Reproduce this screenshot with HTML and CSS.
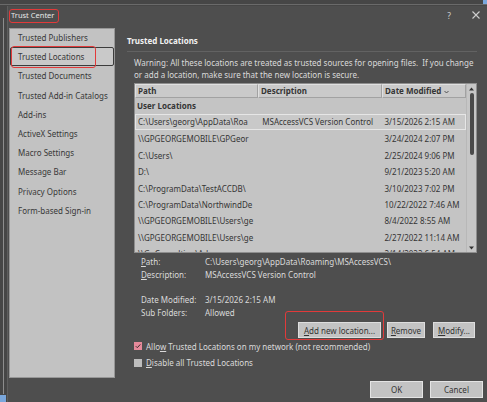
FILE: index.html
```html
<!DOCTYPE html>
<html>
<head>
<meta charset="utf-8">
<title>Trust Center</title>
<link rel="stylesheet" href="styles.css">
</head>
<body>
<div class="desk">
  <span class="corner corner-tr"></span>
  <span class="corner corner-bl"></span>
  <div class="dialog">
    <div class="titlebar">
      <span class="title">Trust Center</span>
      <span class="tb-help">?</span>
      <span class="tb-close"><svg width="8" height="8" viewBox="0 0 8 8"><path d="M0.5 0.5 L7.5 7.5 M7.5 0.5 L0.5 7.5" stroke="#cfcfcf" stroke-width="1.1"/></svg></span>
    </div>
    <div class="content">
      <nav class="nav">
        <div class="nav-item">Trusted Publishers</div>
        <div class="nav-item selected">Trusted Locations</div>
        <div class="nav-item">Trusted Documents</div>
        <div class="nav-item">Trusted Add-in Catalogs</div>
        <div class="nav-item">Add-ins</div>
        <div class="nav-item">ActiveX Settings</div>
        <div class="nav-item">Macro Settings</div>
        <div class="nav-item">Message Bar</div>
        <div class="nav-item">Privacy Options</div>
        <div class="nav-item">Form-based Sign-in</div>
      </nav>
      <main class="main">
        <div class="heading">Trusted Locations</div>
        <div class="warning">Warning: All these locations are treated as trusted sources for opening files.&nbsp; If you change<br>or add a location, make sure that the new location is secure.</div>
        <div class="table">
          <div class="table-inner">
            <div class="thead">
              <div class="th c1">Path</div>
              <div class="th c2">Description</div>
              <div class="th c3">Date Modified <svg class="chev" width="5" height="4" viewBox="0 0 5 4"><path d="M0.5 1 L2.5 3 L4.5 1" fill="none" stroke="#444" stroke-width="0.9"/></svg></div>
            </div>
            <div class="group">User Locations</div>
            <div class="row sel"><span class="td c1">C:\Users\georg\AppData\Roa</span><span class="td c2">MSAccessVCS Version Control</span><span class="td c3">3/15/2026 2:15 AM</span></div>
            <div class="row"><span class="td c1">\\GPGEORGEMOBILE\GPGeor</span><span class="td c2"></span><span class="td c3">3/24/2024 2:07 PM</span></div>
            <div class="row"><span class="td c1">C:\Users\</span><span class="td c2"></span><span class="td c3">2/25/2024 9:06 PM</span></div>
            <div class="row"><span class="td c1">D:\</span><span class="td c2"></span><span class="td c3">9/21/2023 5:20 AM</span></div>
            <div class="row"><span class="td c1">C:\ProgramData\TestACCDB\</span><span class="td c2"></span><span class="td c3">3/10/2023 7:02 PM</span></div>
            <div class="row"><span class="td c1">C:\ProgramData\NorthwindDe</span><span class="td c2"></span><span class="td c3">10/22/2022 7:46 AM</span></div>
            <div class="row"><span class="td c1">\\GPGEORGEMOBILE\Users\ge</span><span class="td c2"></span><span class="td c3">8/4/2022 8:55 AM</span></div>
            <div class="row"><span class="td c1">\\GPGEORGEMOBILE\Users\ge</span><span class="td c2"></span><span class="td c3">2/27/2022 11:14 AM</span></div>
            <div class="row"><span class="td c1">\\GpConsulting\Ad</span><span class="td c2"></span><span class="td c3">2/14/2022 6:54 AM</span></div>
          </div>
          <div class="scrollbar">
            <svg class="arrow" width="5" height="4" viewBox="0 0 5 4"><path d="M0 3.5 L2.5 0.5 L5 3.5 Z" fill="#333"/></svg>
            <div class="thumb"></div>
            <svg class="arrow down" width="5" height="4" viewBox="0 0 5 4"><path d="M0 0.5 L2.5 3.5 L5 0.5 Z" fill="#333"/></svg>
          </div>
        </div>
        <div class="details">
          <div class="drow"><span class="dl"><u>P</u>ath:</span><span class="dv">C:\Users\georg\AppData\Roaming\MSAccessVCS\</span></div>
          <div class="drow"><span class="dl"><u>D</u>escription:</span><span class="dv">MSAccessVCS Version Control</span></div>
          <div class="drow gap"><span class="dl">Date Modified:</span><span class="dv">3/15/2026 2:15 AM</span></div>
          <div class="drow"><span class="dl">Sub Folders:</span><span class="dv">Allowed</span></div>
        </div>
        <div class="actions">
          <button class="btn b-add"><u>A</u>dd new location...</button>
          <button class="btn b-remove"><u>R</u>emove</button>
          <button class="btn b-modify"><u>M</u>odify...</button>
        </div>
        <div class="check"><span class="box on"><svg width="8" height="8" viewBox="0 0 8 8"><path d="M1.8 4.2 L3.3 5.7 L6.3 2.4" fill="none" stroke="#3a2a2c" stroke-width="1"/></svg></span><span>Allo<u>w</u> Trusted Locations on my network (not recommended)</span></div>
        <div class="check"><span class="box"></span><span><u>D</u>isable all Trusted Locations</span></div>
      </main>
    </div>
    <div class="footer">
      <button class="btn big">OK</button>
      <button class="btn big">Cancel</button>
    </div>
  </div>
  <span class="annot an-title"></span>
  <span class="annot an-nav"></span>
  <span class="annot an-add"></span>
</div>
</body>
</html>
```

FILE: styles.css
```css
* { box-sizing: border-box; margin: 0; padding: 0; }
html, body { width: 487px; height: 402px; overflow: hidden; }
body {
  background: #474747;
  font-family: "Noto Sans", "Open Sans", sans-serif;
  font-size: 8px;
  color: #dadada;
}
u { text-decoration: underline; text-underline-offset: 1px; }

.desk {
  position: relative;
  width: 487px;
  height: 402px;
  background: #464646;
  padding: 6px 0 0 7px;
}
.desk::before {
  content: "";
  position: absolute;
  left: 3px; top: 18px;
  width: 1px; height: 376px;
  background: #8d8d8d;
}
.desk::after {
  content: "";
  position: absolute;
  left: 0; top: 4px;
  width: 487px; height: 1px;
  background: #6a6a6a;
}
.corner { position: absolute; background: #7aa7dc; }
.corner-tr { right: 0; top: 0; width: 4px; height: 5px; }
.corner-bl { left: 0; bottom: 0; width: 6px; height: 7px; }

.dialog {
  height: 396px;
  background: #4e4e4e;
  border-left: 1px solid #5e5e5e;
  display: flex;
  flex-direction: column;
}

.titlebar {
  height: 22px;
  display: flex;
  align-items: center;
  padding: 0 0 4px 3px;
  color: #e8e8e8;
}
.title { flex: 1; font-size: 7.5px; }
.tb-help { width: 10px; text-align: center; color: #cfcfcf; margin-right: 18px; font-size: 8.5px; }
.tb-close { width: 10px; margin-right: 5px; display: flex; }

.content { display: flex; height: 350px; }

.nav {
  width: 106px;
  margin-left: 1px;
  background: #c2c2c2;
  box-shadow: inset 0 0 0 1px #979797;
  color: #383838;
  font-size: 8px;
}
.nav-item {
  height: 19.2px;
  line-height: 19.2px;
  padding-left: 8px;
  margin: 0 1px;
  white-space: nowrap;
}
.nav-item.selected {
  border: 1px solid #3c3c3c;
  border-radius: 2px;
  background: #c9c9c9;
  line-height: 17.2px;
  padding-left: 7px;
}

.main {
  flex: 1;
  padding: 6px 10px 0 12px;
  display: flex;
  flex-direction: column;
}
.heading {
  font-weight: bold;
  font-size: 8px;
  color: #f2f2f2;
  line-height: 13px;
  padding-bottom: 4px;
  border-bottom: 1px solid #626262;
}
.warning {
  margin-top: 5px;
  padding-left: 7px;
  line-height: 12px;
  white-space: nowrap;
}

.table {
  margin: 2px 0 0 7px;
  height: 170px;
  flex: none;
  display: flex;
  background: #c4c4c4;
  border: 1px solid #8e8e8e;
  color: #353535;
}
.table-inner { width: 331px; overflow: hidden; }
.thead { display: flex; height: 14px; }
.th {
  font-weight: bold;
  line-height: 12px;
  padding-left: 2px;
  background: #cacaca;
  border: 1px solid #e0e0e0;
  border-right-color: #a2a2a2;
  border-bottom-color: #a2a2a2;
  white-space: nowrap;
  display: flex;
  align-items: center;
  gap: 3px;
}
.c1 { width: 123px; }
.c2 { width: 124px; }
.c3 { width: 84px; }
.chev { margin-top: 1px; }
.group {
  height: 16px;
  line-height: 16px;
  padding-left: 2px;
  font-weight: bold;
}
.row {
  display: flex;
  height: 16.4px;
  line-height: 16.4px;
  border: 1px solid transparent;
  width: 331px;
}
.row.sel { border-color: #e6e6e6; background: #c9c9c9; line-height: 14.4px; }
.td { overflow: hidden; white-space: nowrap; padding-left: 2px; }
.td.c2 { padding-left: 4px; }
.td.c3 { padding-left: 3px; }

.scrollbar {
  flex: 1;
  background: #c6c6c6;
  border-left: 1px solid #b8b8b8;
  display: flex;
  flex-direction: column;
  align-items: center;
  padding: 3px 0 2px;
}
.arrow { flex: none; }
.thumb {
  width: 4px;
  height: 62px;
  margin-top: 2px;
  border-radius: 2px;
  background: #4a4a4a;
}
.arrow.down { margin-top: auto; }

.details { margin-top: 2px; padding-left: 14px; }
.drow { display: flex; line-height: 13px; }
.drow.gap { margin-top: 12px; }
.dl { width: 64px; }

.actions {
  display: flex;
  justify-content: flex-end;
  margin-top: 3px;
  padding-right: 2px;
}
.btn {
  font-family: inherit;
  font-size: 8px;
  height: 16px;
  background: #c3c3c3;
  color: #333;
  border: 1px solid #dedede;
}
.b-add { width: 83px; }
.b-remove { width: 38px; margin-left: 6px; }
.b-modify { width: 42px; margin-left: 8px; }

.check {
  display: flex;
  align-items: center;
  margin-left: 7px;
  height: 16.5px;
}
.box {
  width: 8px; height: 8px;
  background: #bdbdbd;
  margin-right: 4px;
  display: flex;
}
.box.on { background: #e5899a; }

.footer {
  display: flex;
  justify-content: flex-end;
  gap: 7px;
  padding-right: 4px;
  margin-top: 3px;
}
.btn.big { width: 53px; height: 17px; border-color: #e4e4e4; }

.annot {
  position: absolute;
  border: 1.5px solid #e23a3a;
  border-radius: 3px;
}
.an-title { left: 9px; top: 9px; width: 50px; height: 14px; }
.an-nav { left: 11px; top: 46px; width: 85px; height: 22px; }
.an-add { left: 285px; top: 311px; width: 99px; height: 29px; }
```
